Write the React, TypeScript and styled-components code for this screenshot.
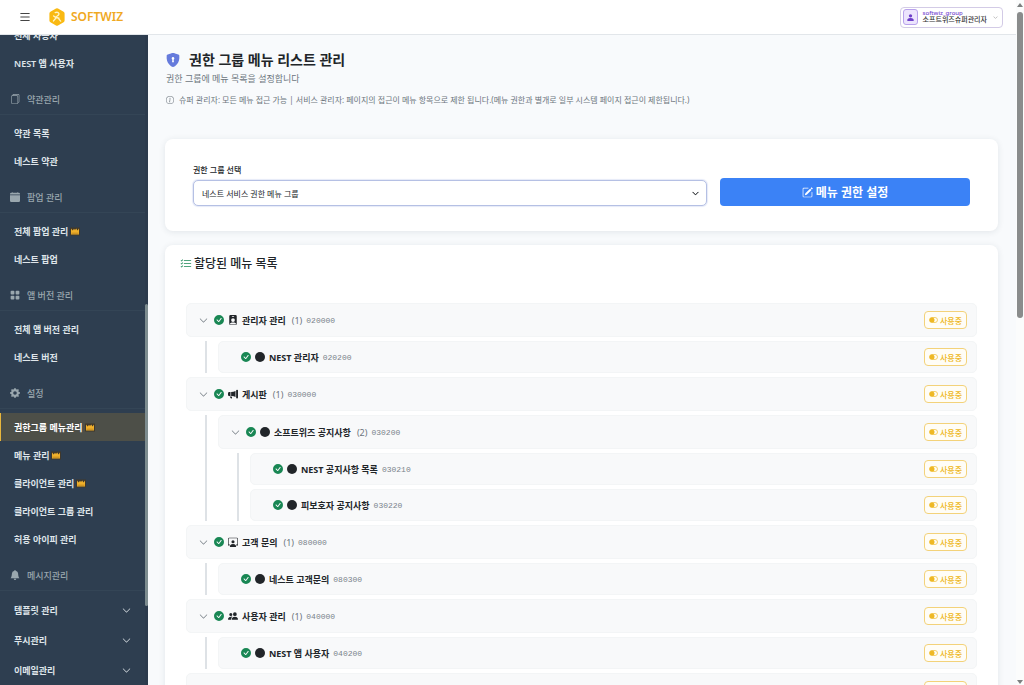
import React from "react";
import styled, { createGlobalStyle } from "styled-components";
import {
  BsBellFill,
  BsCalendarFill,
  BsCheckCircleFill,
  BsChevronDown,
  BsCircleFill,
  BsFiles,
  BsGearFill,
  BsGridFill,
  BsInfoCircle,
  BsList,
  BsListCheck,
  BsMegaphoneFill,
  BsPencilSquare,
  BsPeopleFill,
  BsPersonBadgeFill,
  BsPersonFill,
  BsPersonWorkspace,
} from "react-icons/bs";

const GlobalStyle = createGlobalStyle`
  *, *::before, *::after { box-sizing: border-box; }
  body {
    margin: 0;
    background: #f8fafc;
    color: #212529;
    font-family: "Noto Sans", "Noto Sans CJK KR", sans-serif;
    font-size: 9px;
  }
  button, select { font-family: inherit; }
  h1, h2, h3, p, ul { margin: 0; padding: 0; }
  ul { list-style: none; }
  a { color: inherit; text-decoration: none; }
  svg { display: block; flex: none; }
`;

const Window = styled.div`
  display: flex;
  height: 100vh;
  overflow: hidden;
`;

const Shell = styled.div`
  flex: 1;
  min-width: 0;
  display: flex;
  flex-direction: column;
`;

const Header = styled.header`
  flex: none;
  height: 35px;
  display: flex;
  align-items: center;
  padding: 0 13px 0 18px;
  background: #fff;
  border-bottom: 1px solid #e2e6ea;
`;

const IconButton = styled.button`
  display: grid;
  place-items: center;
  padding: 0;
  border: 0;
  background: none;
  color: #444;
  cursor: pointer;
`;

const Brand = styled.a`
  display: flex;
  align-items: center;
  gap: 5px;
  margin-left: 16px;
  color: #f0a821;
  font-size: 12px;
  font-weight: 600;
  line-height: 18px;
`;

const Profile = styled.button`
  display: flex;
  align-items: center;
  gap: 5px;
  height: 21px;
  margin-left: auto;
  padding: 0 4px 0 2px;
  border: 1px solid #d3cbe6;
  border-radius: 4px;
  background: #fff;
  color: #333;
  text-align: left;
  cursor: pointer;
`;

const Avatar = styled.span`
  display: grid;
  place-items: center;
  width: 15px;
  height: 16px;
  border: 1px solid #b9a2ec;
  border-radius: 3px;
  background: #ece4fd;
  color: #6d3fc9;
`;

const ProfileText = styled.span`
  display: flex;
  flex-direction: column;
  font-size: 7px;
  font-weight: 500;
  line-height: 8px;
`;

const ProfileId = styled.span`
  color: #7546cf;
  font-size: 6px;
  line-height: 6px;
`;

const ProfileCaret = styled.span`
  margin-left: 1px;
  color: #777;
`;

const Body = styled.div`
  flex: 1;
  min-height: 0;
  display: flex;
`;

const Sidebar = styled.nav`
  flex: none;
  display: flex;
  width: 148px;
  overflow: hidden;
  background: #2e3e50;
  color: #dfe5ea;
`;

const SidebarScroll = styled.div`
  flex: 1;
  min-width: 0;
  margin-top: -14px;
`;

const SidebarTrack = styled.div`
  width: 3px;
  padding-top: 269px;
  background: #2c3b4d;
`;

const SidebarThumb = styled.div`
  height: 302px;
  border-radius: 2px;
  background: #7d8c8f;
`;

const SectionTitle = styled.h3`
  display: flex;
  align-items: center;
  gap: 7px;
  height: 38px;
  margin-bottom: 4px;
  padding: 7px 10px 0;
  border-bottom: 1px solid #344556;
  color: #9aa7ae;
  font-size: 9px;
  font-weight: 500;
`;

const NavLink = styled.a<{ $active?: boolean; $tall?: boolean }>`
  display: flex;
  align-items: center;
  justify-content: ${(p) => (p.$tall ? "space-between" : "flex-start")};
  gap: 2px;
  height: ${(p) => (p.$tall ? 30 : 28)}px;
  padding: 0 14px 0 13px;
  border-left: 1px solid ${(p) => (p.$active ? "#e9b63c" : "transparent")};
  background: ${(p) => (p.$active ? "#4d4f48" : "transparent")};
  color: ${(p) => (p.$active ? "#fff" : "inherit")};
  font-size: 9px;
  font-weight: 600;
`;

const Main = styled.main`
  flex: 1;
  min-width: 0;
  overflow: hidden;
  padding: 15px 18px 0 17px;
`;

const PageHeading = styled.div`
  padding-left: 1px;
`;

const PageTitle = styled.h1`
  display: flex;
  align-items: center;
  gap: 9px;
  font-size: 14px;
  font-weight: 600;
  line-height: 20px;
`;

const Subtitle = styled.p`
  margin-top: 2px;
  color: #6c757d;
  font-size: 9px;
  line-height: 14px;
`;

const Notice = styled.p`
  display: flex;
  align-items: center;
  gap: 5px;
  margin-top: 7px;
  color: #6c757d;
  font-size: 8px;
  line-height: 14px;
`;

const Card = styled.section`
  border-radius: 8px;
  background: #fff;
  box-shadow: 0 1px 6px rgba(30, 50, 70, 0.1);
`;

const FilterCard = styled(Card)`
  display: grid;
  grid-template-columns: minmax(0, 1fr) 250px;
  align-items: end;
  gap: 13px;
  margin: 32px 0 14px;
  padding: 24px 28px 25px;
`;

const Field = styled.div`
  display: flex;
  flex-direction: column;
  gap: 3px;
`;

const FieldLabel = styled.label`
  font-size: 8px;
  font-weight: 500;
  line-height: 14px;
`;

const SelectWrap = styled.div`
  display: grid;
  align-items: center;

  > * { grid-area: 1 / 1; }
  > svg { justify-self: end; margin-right: 8px; pointer-events: none; }
`;

const Select = styled.select`
  appearance: none;
  width: 100%;
  height: 26px;
  padding: 0 24px 0 8px;
  border: 1px solid #b5c0e4;
  border-radius: 5px;
  background: #fff;
  box-shadow: 0 0 1px 1px #e6eaf8;
  color: #212529;
  font-size: 8px;
`;

const PrimaryButton = styled.button`
  display: flex;
  align-items: center;
  justify-content: center;
  gap: 3px;
  height: 28px;
  padding: 0;
  border: 0;
  border-radius: 4px;
  background: #3b82f6;
  color: #fff;
  font-size: 12px;
  font-weight: 600;
  cursor: pointer;
`;

const ListCard = styled(Card)`
  padding: 9px 21px 24px 15px;
`;

const ListTitle = styled.h2`
  display: flex;
  align-items: center;
  gap: 2px;
  font-size: 12px;
  font-weight: 500;
  line-height: 20px;

  > svg { color: #198754; }
`;

const Tree = styled.ul`
  display: flex;
  flex-direction: column;
  gap: 4px;
`;

const RootTree = styled(Tree)`
  margin: 29px 0 0 6px;
`;

const Branch = styled(Tree)`
  margin: 4px 0 0 19px;
  padding-left: 11px;
  border-left: 2px solid #dee2e6;
`;

const Row = styled.div<{ $leaf: boolean }>`
  display: flex;
  align-items: center;
  gap: 4px;
  height: ${(p) => (p.$leaf ? 32 : 34)}px;
  padding: 0 9px 0 ${(p) => (p.$leaf ? 22 : 11)}px;
  border: 1px solid #f3f5f6;
  border-radius: 5px;
  background: #f8f9fa;
`;

const Toggle = styled(IconButton)`
  width: 10px;
  height: 10px;
  margin-right: 2px;
  color: #6c757d;
`;

const Name = styled.span`
  font-size: 9px;
  font-weight: 700;
`;

const Count = styled.span`
  margin-left: 2px;
  color: #6c757d;
  font-size: 9px;
`;

const Code = styled.code`
  color: #7a838b;
  font-family: "Liberation Mono", monospace;
  font-size: 8px;
`;

const StateButton = styled.button`
  display: flex;
  align-items: center;
  justify-content: center;
  gap: 2px;
  width: 43px;
  height: 18px;
  margin-left: auto;
  padding: 0;
  border: 1px solid #f3d27a;
  border-radius: 4px;
  background: #fffdf6;
  color: #eeb824;
  font-size: 8px;
  font-weight: 500;
  cursor: pointer;
`;

const ScrollTrack = styled.div`
  flex: none;
  display: flex;
  flex-direction: column;
  align-items: center;
  width: 8px;
  padding: 3px 0 1px;
  background: #fbfcfc;
  color: #7c7f7f;
`;

const ScrollThumb = styled.div`
  width: 6px;
  height: 45%;
  margin: 4px 0 auto;
  border-radius: 3px;
  background: #8a8c8c;
`;

function Logo() {
  return (
    <svg width="18" height="18" viewBox="0 0 18 18" aria-hidden="true">
      <path d="M8 .6a2 2 0 0 1 2 0l5.600 3.200a2 2 0 0 1 1 1.700v7a2 2 0 0 1-1 1.700L10 17.400a2 2 0 0 1-2 0l-5.600-3.200a2 2 0 0 1-1-1.700v-7a2 2 0 0 1 1-1.700z" fill="#f9b912" />
      <path d="M7.200 4.600c2.400-1 4.300.2 3.600 1.900-.5 1.200-1.900 1.500-3 2.700M5.600 8l2 1.300 3.400.9M8.200 9.800l-2.700 3.100M10.600 10.600l2 2.500" fill="none" stroke="#fff3c4" strokeWidth="1.400" strokeLinecap="round" strokeLinejoin="round" />
    </svg>
  );
}

function Shield() {
  return (
    <svg width="14" height="14" viewBox="0 0 16 16" aria-hidden="true">
      <path d="M8 0c-.7 0-2.800.6-4.500 1.200-.9.300-1.800.600-2.300.8A1.200 1.200 0 0 0 .8 3C.3 7.200 1.600 10.500 3.500 12.800 4.800 14.300 6.800 16 8 16s3.200-1.700 4.500-3.200C14.400 10.500 15.700 7.200 15.200 3a1.200 1.200 0 0 0-.4-1c-.5-.2-1.400-.5-2.300-.8C10.800.6 8.700 0 8 0z" fill="#667bdc" />
      <path d="M8 4.600a1.600 1.600 0 0 1 .7 3l.4 3H6.900l.4-3a1.600 1.600 0 0 1 .7-3z" fill="#fff" />
    </svg>
  );
}

function Crown() {
  return (
    <svg width="10" height="9" viewBox="0 0 10 9" aria-label="슈퍼 관리자">
      <path d="M0 .5h10v8H0z" fill="#40382b" />
      <path d="M1 1.500 2.700 3.600 4 1.800l1 1.300L6.200 1.600l1.300 2L9 1.500V7.600H1z" fill="#efb02b" />
      <path d="M1.500 6.200h7" stroke="#a87418" strokeWidth=".6" />
    </svg>
  );
}

function Switch() {
  return (
    <svg width="9" height="8" viewBox="0 0 18 16" aria-hidden="true">
      <rect x="1" y="3" width="16" height="10" rx="5" fill="none" stroke="currentColor" strokeWidth="1.300" />
      <circle cx="6" cy="8" r="5" fill="currentColor" />
    </svg>
  );
}

function Arrow({ up }: { up?: boolean }) {
  return (
    <svg width="6" height="5" viewBox="0 0 6 5" aria-hidden="true">
      <path d={up ? "M3 0 6 4H0z" : "M3 5 6 1H0z"} fill="currentColor" />
    </svg>
  );
}

interface NavItem {
  label: string;
  crown?: boolean;
  active?: boolean;
  expandable?: boolean;
}

interface NavSection {
  title?: string;
  icon?: React.ReactNode;
  items: NavItem[];
}

const sections: NavSection[] = [
  { items: [{ label: "전체 사용자" }, { label: "NEST 앱 사용자" }] },
  {
    title: "약관관리",
    icon: <BsFiles size={10} />,
    items: [{ label: "약관 목록" }, { label: "네스트 약관" }],
  },
  {
    title: "팝업 관리",
    icon: <BsCalendarFill size={10} />,
    items: [{ label: "전체 팝업 관리", crown: true }, { label: "네스트 팝업" }],
  },
  {
    title: "앱 버전 관리",
    icon: <BsGridFill size={10} />,
    items: [{ label: "전체 앱 버전 관리" }, { label: "네스트 버전" }],
  },
  {
    title: "설정",
    icon: <BsGearFill size={10} />,
    items: [
      { label: "권한그룹 메뉴관리", crown: true, active: true },
      { label: "메뉴 관리", crown: true },
      { label: "클라이언트 관리", crown: true },
      { label: "클라이언트 그룹 관리" },
      { label: "허용 아이피 관리" },
    ],
  },
  {
    title: "메시지관리",
    icon: <BsBellFill size={10} />,
    items: [
      { label: "템플릿 관리", expandable: true },
      { label: "푸시관리", expandable: true },
      { label: "이메일관리", expandable: true },
    ],
  },
];

interface MenuNode {
  name: string;
  code: string;
  icon?: React.ReactNode;
  children?: MenuNode[];
}

const menus: MenuNode[] = [
  {
    name: "관리자 관리",
    code: "020000",
    icon: <BsPersonBadgeFill size={10} />,
    children: [{ name: "NEST 관리자", code: "020200" }],
  },
  {
    name: "게시판",
    code: "030000",
    icon: <BsMegaphoneFill size={10} />,
    children: [
      {
        name: "소프트위즈 공지사항",
        code: "030200",
        children: [
          { name: "NEST 공지사항 목록", code: "030210" },
          { name: "피보호자 공지사항", code: "030220" },
        ],
      },
    ],
  },
  {
    name: "고객 문의",
    code: "080000",
    icon: <BsPersonWorkspace size={10} />,
    children: [{ name: "네스트 고객문의", code: "080300" }],
  },
  {
    name: "사용자 관리",
    code: "040000",
    icon: <BsPeopleFill size={10} />,
    children: [{ name: "NEST 앱 사용자", code: "040200" }],
  },
  {
    name: "약관관리",
    code: "050000",
    icon: <BsFiles size={10} />,
    children: [{ name: "네스트 약관", code: "050200" }],
  },
];

function MenuItem({ node }: { node: MenuNode }) {
  const children = node.children;
  return (
    <li>
      <Row $leaf={!children}>
        {children && (
          <Toggle type="button" aria-label={`${node.name} 접기`}>
            <BsChevronDown size={9} />
          </Toggle>
        )}
        <BsCheckCircleFill size={10} color="#198754" />
        {node.icon ?? <BsCircleFill size={10} />}
        <Name>{node.name}</Name>
        {children && <Count>({children.length})</Count>}
        <Code>{node.code}</Code>
        <StateButton type="button">
          <Switch />
          사용중
        </StateButton>
      </Row>
      {children && (
        <Branch>
          {children.map((child) => (
            <MenuItem key={child.code} node={child} />
          ))}
        </Branch>
      )}
    </li>
  );
}

export default function App() {
  return (
    <Window lang="ko">
      <GlobalStyle />
      <Shell>
        <Header>
          <IconButton type="button" aria-label="메뉴 열기">
            <BsList size={14} />
          </IconButton>
          <Brand href="#">
            <Logo />
            SOFTWIZ
          </Brand>
          <Profile type="button">
            <Avatar>
              <BsPersonFill size={9} />
            </Avatar>
            <ProfileText>
              <ProfileId>softwiz_group</ProfileId>
              소프트위즈슈퍼관리자
            </ProfileText>
            <ProfileCaret>
              <BsChevronDown size={5} />
            </ProfileCaret>
          </Profile>
        </Header>
        <Body>
          <Sidebar>
            <SidebarScroll>
              {sections.map((section, index) => (
                <div key={index}>
                  {section.title && (
                    <SectionTitle>
                      {section.icon}
                      {section.title}
                    </SectionTitle>
                  )}
                  <ul>
                    {section.items.map((item) => (
                      <li key={item.label}>
                        <NavLink href="#" $active={item.active} $tall={item.expandable}>
                          {item.label}
                          {item.crown && <Crown />}
                          {item.expandable && <BsChevronDown size={9} />}
                        </NavLink>
                      </li>
                    ))}
                  </ul>
                </div>
              ))}
            </SidebarScroll>
            <SidebarTrack>
              <SidebarThumb />
            </SidebarTrack>
          </Sidebar>
          <Main>
            <PageHeading>
              <PageTitle>
                <Shield />
                권한 그룹 메뉴 리스트 관리
              </PageTitle>
              <Subtitle>권한 그룹에 메뉴 목록을 설정합니다</Subtitle>
              <Notice>
                <BsInfoCircle size={8} />
                슈퍼 관리자: 모든 메뉴 접근 가능 | 서비스 관리자: 페이지의 접근이 메뉴 항목으로 제한 됩니다.(메뉴 권한과 별개로 일부 시스템 페이지 접근이 제한됩니다.)
              </Notice>
            </PageHeading>
            <FilterCard>
              <Field>
                <FieldLabel htmlFor="group">권한 그룹 선택</FieldLabel>
                <SelectWrap>
                  <Select id="group">
                    <option>네스트 서비스 권한 메뉴 그룹</option>
                  </Select>
                  <BsChevronDown size={7} strokeWidth={1} />
                </SelectWrap>
              </Field>
              <PrimaryButton type="button">
                <BsPencilSquare size={11} />
                메뉴 권한 설정
              </PrimaryButton>
            </FilterCard>
            <ListCard>
              <ListTitle>
                <BsListCheck size={12} />
                할당된 메뉴 목록
              </ListTitle>
              <RootTree>
                {menus.map((node) => (
                  <MenuItem key={node.code} node={node} />
                ))}
              </RootTree>
            </ListCard>
          </Main>
        </Body>
      </Shell>
      <ScrollTrack aria-hidden="true">
        <Arrow up />
        <ScrollThumb />
        <Arrow />
      </ScrollTrack>
    </Window>
  );
}
